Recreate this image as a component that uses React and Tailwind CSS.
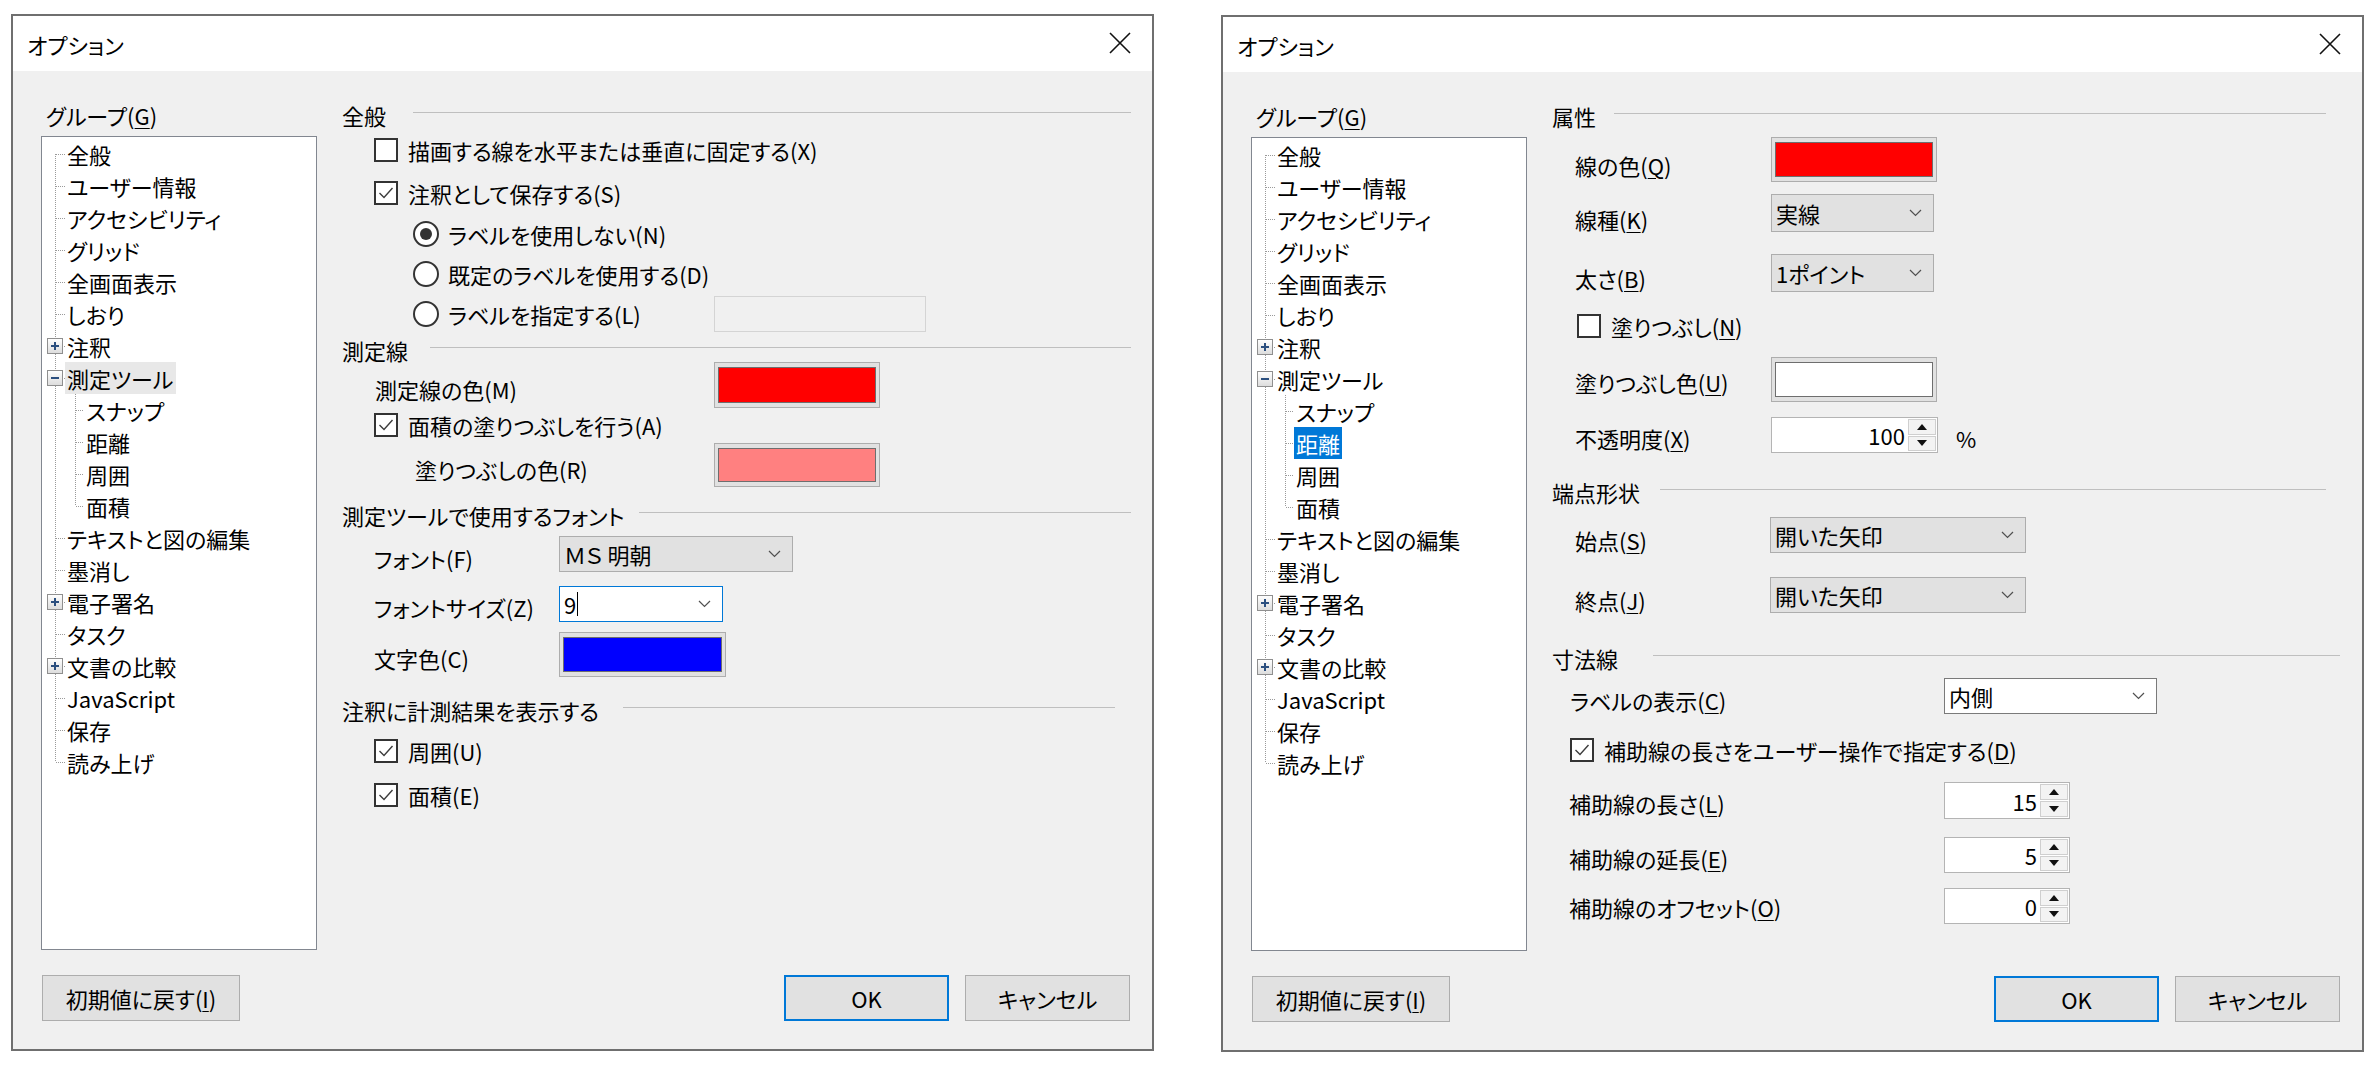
import React from "react";

const FONT = "font-['Noto_Sans_CJK_JP','Noto_Sans_CJK_SC',sans-serif]";

function U({ c }) {
  return <span className="underline underline-offset-[3px] decoration-1">{c}</span>;
}

function Checkbox({ checked }) {
  return (
    <div className="w-[24px] h-[24px] shrink-0 border-2 border-[#333333] bg-white flex items-center justify-center">
      {checked && (
        <svg width="18" height="18" viewBox="0 0 18 18">
          <path d="M2.5 9 L7 13.5 L15.5 4" stroke="#3c3c3c" strokeWidth="1.4" fill="none" />
        </svg>
      )}
    </div>
  );
}

function Radio({ on }) {
  return (
    <div className="w-[26px] h-[26px] shrink-0 rounded-full border-2 border-[#333333] bg-white flex items-center justify-center">
      {on && <div className="w-[12px] h-[12px] rounded-full bg-[#333333]" />}
    </div>
  );
}

function Chevron() {
  return (
    <svg width="13" height="8" viewBox="0 0 13 8" className="shrink-0">
      <path d="M1 1 L6.5 6.5 L12 1" stroke="#505050" strokeWidth="1.2" fill="none" />
    </svg>
  );
}

function SpinArrows() {
  return (
    <div className="w-[30px] shrink-0 flex flex-col p-[1px] gap-[1px]">
      <div className="flex-1 bg-[#f3f3f3] border border-[#cfcfcf] flex items-center justify-center">
        <svg width="10" height="6" viewBox="0 0 10 6"><path d="M0 6 L5 0 L10 6 Z" fill="#111" /></svg>
      </div>
      <div className="flex-1 bg-[#f3f3f3] border border-[#cfcfcf] flex items-center justify-center">
        <svg width="10" height="6" viewBox="0 0 10 6"><path d="M0 0 L10 0 L5 6 Z" fill="#111" /></svg>
      </div>
    </div>
  );
}

function Header({ title, lineStart, mr, h = "h-[32px]", mt = "" }) {
  return (
    <div className={`flex items-center ${h} ${mt} ${mr}`}>
      <span className={`${lineStart} shrink-0 whitespace-nowrap`}>{title}</span>
      <div className="flex-1 h-px bg-[#bfbfbf] mb-[6px]" />
    </div>
  );
}

function PlusBox({ minus }) {
  return (
    <g>
      <defs>
        <linearGradient id="pbg" x1="0" y1="0" x2="0" y2="1">
          <stop offset="0" stopColor="#ffffff" />
          <stop offset="1" stopColor="#dcdcdc" />
        </linearGradient>
      </defs>
      <rect x="5.5" y="8.5" width="15" height="15" fill="url(#pbg)" stroke="#8f8f8f" />
      <line x1="9" y1="16" x2="17" y2="16" stroke="#2b4f7f" strokeWidth="2" />
      {!minus && <line x1="13" y1="12" x2="13" y2="20" stroke="#2b4f7f" strokeWidth="2" />}
    </g>
  );
}

const DOT = { stroke: "#9a9a9a", strokeWidth: 1, strokeDasharray: "1 1" };

const TREE = [
  { t: "全般", first: true },
  { t: "ユーザー情報" },
  { t: "アクセシビリティ" },
  { t: "グリッド" },
  { t: "全画面表示" },
  { t: "しおり" },
  { t: "注釈", box: "+" },
  { t: "測定ツール", box: "-", selL: true },
  { t: "スナップ", child: true },
  { t: "距離", child: true, selR: true },
  { t: "周囲", child: true },
  { t: "面積", child: true, lastChild: true },
  { t: "テキストと図の編集" },
  { t: "墨消し" },
  { t: "電子署名", box: "+" },
  { t: "タスク" },
  { t: "文書の比較", box: "+" },
  { t: "JavaScript" },
  { t: "保存" },
  { t: "読み上げ", last: true },
];

function TreeRow({ item, side }) {
  const sel = side === "left" ? item.selL : item.selR;
  const selCls =
    side === "left" && sel
      ? "bg-[#e8e8e8] text-black"
      : side === "right" && sel
      ? "bg-[#0078d7] text-white"
      : "text-black";
  return (
    <div className="flex h-[32px] items-center">
      {item.child ? (
        <svg width="42" height="32" className="shrink-0">
          <line x1="13.5" y1="0" x2="13.5" y2="32" {...DOT} />
          <line x1="33.5" y1="0" x2="33.5" y2={item.lastChild ? 16 : 32} {...DOT} />
          <line x1="34" y1="16.5" x2="42" y2="16.5" {...DOT} />
        </svg>
      ) : (
        <svg width="23" height="32" className="shrink-0">
          <line x1="13.5" y1={item.first ? 16 : 0} x2="13.5" y2={item.last ? 16 : 32} {...DOT} />
          <line x1="14" y1="16.5" x2="23" y2="16.5" {...DOT} />
          {item.box && <PlusBox minus={item.box === "-"} />}
        </svg>
      )}
      <span className={`px-[2px] h-[32px] leading-[32px] whitespace-nowrap ${selCls}`}>{item.t}</span>
    </div>
  );
}

function Swatch({ w, color }) {
  return (
    <div className={`${w} h-full shrink-0 border border-[#adadad] bg-[#e1e1e1] px-[3px] py-[4px]`}>
      <div className={`w-full h-full border border-[#6e6e6e] ${color}`} />
    </div>
  );
}

function Combo({ w, text, variant = "gray", caret = false }) {
  const cls =
    variant === "gray"
      ? "bg-[#e1e1e1] border-[#adadad]"
      : variant === "focus"
      ? "bg-white border-[#0078d7]"
      : "bg-white border-[#7a7a7a]";
  return (
    <div className={`${w} h-full shrink-0 border ${cls} flex items-center pl-[4px] pr-[11px]`}>
      <span className="whitespace-nowrap">{text}</span>
      {caret && <span className="w-px h-[24px] bg-black ml-[1px]" />}
      <span className="flex-1" />
      <Chevron />
    </div>
  );
}

function Spin({ w, value }) {
  return (
    <div className={`${w} h-full shrink-0 border border-[#b4b4b4] bg-white flex`}>
      <div className="flex-1 flex items-center justify-end pr-[2px]">{value}</div>
      <SpinArrows />
    </div>
  );
}

function LeftSettings() {
  return (
    <div className="flex flex-col w-[789px] pt-[28px]">
      <Header title="全般" lineStart="w-[71px]" mr="" />
      <div className="mt-[3px] h-[32px] flex items-center pl-[32px] gap-[10px]">
        <Checkbox />
        <span>描画する線を水平または垂直に固定する(X)</span>
      </div>
      <div className="mt-[11px] h-[32px] flex items-center pl-[32px] gap-[10px]">
        <Checkbox checked />
        <span>注釈として保存する(S)</span>
      </div>
      <div className="mt-[9px] h-[32px] flex items-center pl-[71px] gap-[9px]">
        <Radio on />
        <span>ラベルを使用しない(N)</span>
      </div>
      <div className="mt-[8px] h-[32px] flex items-center pl-[71px] gap-[9px]">
        <Radio />
        <span>既定のラベルを使用する(D)</span>
      </div>
      <div className="mt-[6px] h-[36px] flex items-center">
        <div className="w-[372px] shrink-0 flex items-center pl-[71px] gap-[9px]">
          <Radio />
          <span>ラベルを指定する(L)</span>
        </div>
        <div className="w-[212px] h-full border border-[#d4d4d4] bg-[#f0f0f0]" />
      </div>
      <Header title="測定線" lineStart="w-[88px]" mr="" h="h-[24px]" mt="mt-[6px]" />
      <div className="h-[46px] flex items-center">
        <div className="w-[372px] shrink-0 pl-[33px] mt-[8px]">測定線の色(M)</div>
        <Swatch w="w-[166px]" color="bg-[#ff0000]" />
      </div>
      <div className="mt-[1px] h-[32px] flex items-center pl-[32px] gap-[10px]">
        <Checkbox checked />
        <span>面積の塗りつぶしを行う(A)</span>
      </div>
      <div className="mt-[2px] h-[44px] flex items-center">
        <div className="w-[372px] shrink-0 pl-[73px] mt-[8px]">塗りつぶしの色(R)</div>
        <Swatch w="w-[166px]" color="bg-[#ff8080]" />
      </div>
      <Header title="測定ツールで使用するフォント" lineStart="w-[297px]" mr="" mt="mt-[12px]" />
      <div className="mt-[5px] h-[36px] flex items-center">
        <div className="w-[217px] shrink-0 pl-[32px] mt-[8px]">フォント(F)</div>
        <Combo w="w-[234px]" text="ＭＳ 明朝" />
      </div>
      <div className="mt-[14px] h-[36px] flex items-center">
        <div className="w-[217px] shrink-0 pl-[32px] mt-[6px]">フォントサイズ(Z)</div>
        <Combo w="w-[164px]" text="9" variant="focus" caret />
      </div>
      <div className="mt-[10px] h-[45px] flex items-center">
        <div className="w-[217px] shrink-0 pl-[32px] mt-[7px]">文字色(C)</div>
        <Swatch w="w-[167px]" color="bg-[#0000ff]" />
      </div>
      <Header title="注釈に計測結果を表示する" lineStart="w-[281px]" mr="mr-[16px]" mt="mt-[17px]" />
      <div className="mt-[9px] h-[32px] flex items-center pl-[32px] gap-[10px]">
        <Checkbox checked />
        <span>周囲(U)</span>
      </div>
      <div className="mt-[12px] h-[32px] flex items-center pl-[32px] gap-[10px]">
        <Checkbox checked />
        <span>面積(E)</span>
      </div>
    </div>
  );
}

function RightSettings() {
  return (
    <div className="flex flex-col w-[789px] pt-[28px]">
      <Header title="属性" lineStart="w-[62px]" mr="mr-[15px]" />
      <div className="mt-[5px] h-[45px] flex items-center">
        <div className="w-[219px] shrink-0 pl-[23px] mt-[10px]">線の色(<U c="Q" />)</div>
        <Swatch w="w-[166px]" color="bg-[#ff0000]" />
      </div>
      <div className="mt-[12px] h-[38px] flex items-center">
        <div className="w-[219px] shrink-0 pl-[23px] mt-[12px]">線種(<U c="K" />)</div>
        <Combo w="w-[163px]" text="実線" />
      </div>
      <div className="mt-[22px] h-[38px] flex items-center">
        <div className="w-[219px] shrink-0 pl-[23px] mt-[10px]">太さ(<U c="B" />)</div>
        <Combo w="w-[163px]" text="1ポイント" />
      </div>
      <div className="mt-[18px] h-[32px] flex items-center pl-[25px] gap-[10px]">
        <Checkbox />
        <span>塗りつぶし(<U c="N" />)</span>
      </div>
      <div className="mt-[15px] h-[45px] flex items-center">
        <div className="w-[219px] shrink-0 pl-[23px] mt-[4px]">塗りつぶし色(<U c="U" />)</div>
        <Swatch w="w-[166px]" color="bg-white" />
      </div>
      <div className="mt-[15px] h-[36px] flex items-center">
        <div className="w-[219px] shrink-0 pl-[23px] mt-[6px]">不透明度(<U c="X" />)</div>
        <Spin w="w-[167px]" value="100" />
        <span className="ml-[18px] mt-[6px]">%</span>
      </div>
      <Header title="端点形状" lineStart="w-[108px]" mr="mr-[15px]" mt="mt-[23px]" />
      <div className="mt-[9px] h-[36px] flex items-center">
        <div className="w-[218px] shrink-0 pl-[23px] mt-[10px]">始点(<U c="S" />)</div>
        <Combo w="w-[256px]" text="開いた矢印" />
      </div>
      <div className="mt-[24px] h-[36px] flex items-center">
        <div className="w-[218px] shrink-0 pl-[23px] mt-[10px]">終点(<U c="J" />)</div>
        <Combo w="w-[256px]" text="開いた矢印" />
      </div>
      <Header title="寸法線" lineStart="w-[101px]" mr="mr-[1px]" mt="mt-[29px]" />
      <div className="mt-[4px] h-[36px] flex items-center">
        <div className="w-[392px] shrink-0 pl-[18px] mt-[8px]">ラベルの表示(<U c="C" />)</div>
        <Combo w="w-[213px]" text="内側" variant="white" />
      </div>
      <div className="mt-[20px] h-[32px] flex items-center pl-[18px] gap-[10px]">
        <Checkbox checked />
        <span>補助線の長さをユーザー操作で指定する(<U c="D" />)</span>
      </div>
      <div className="mt-[16px] h-[37px] flex items-center">
        <div className="w-[392px] shrink-0 pl-[17px] mt-[4px]">補助線の長さ(<U c="L" />)</div>
        <Spin w="w-[126px]" value="15" />
      </div>
      <div className="mt-[18px] h-[36px] flex items-center">
        <div className="w-[392px] shrink-0 pl-[17px] mt-[6px]">補助線の延長(<U c="E" />)</div>
        <Spin w="w-[126px]" value="5" />
      </div>
      <div className="mt-[15px] h-[36px] flex items-center">
        <div className="w-[392px] shrink-0 pl-[17px] mt-[2px]">補助線のオフセット(<U c="O" />)</div>
        <Spin w="w-[126px]" value="0" />
      </div>
    </div>
  );
}

function Dialog({ side }) {
  return (
    <div
      className={`w-[1143px] h-[1037px] shrink-0 border-2 border-[#6f6f6f] flex flex-col bg-[#f0f0f0] ${
        side === "right" ? "mt-[1px]" : ""
      }`}
    >
      <div className="h-[55px] shrink-0 bg-white flex items-center pl-[14px]">
        <span>オプション</span>
        <span className="flex-1" />
        <svg width="22" height="22" viewBox="0 0 22 22" className="mr-[21px] mb-[2px]">
          <path d="M1 1 L21 21 M21 1 L1 21" stroke="#111" strokeWidth="1.6" />
        </svg>
      </div>
      <div className="flex-1 flex flex-col">
        <div className="h-[879px] shrink-0 flex">
          <div className="ml-[28px] w-[276px] shrink-0 flex flex-col pt-[28px]">
            <div className="h-[32px] leading-[32px] pl-[5px]">
              グループ(<U c="G" />)
            </div>
            <div className="mt-[5px] h-[814px] border border-[#828790] bg-white pt-[1px]">
              {TREE.map((it) => (
                <TreeRow key={it.t} item={it} side={side} />
              ))}
            </div>
          </div>
          <div className="ml-[25px]">{side === "left" ? <LeftSettings /> : <RightSettings />}</div>
        </div>
        <div className="mt-[25px] h-[46px] flex">
          <div className="ml-[29px] w-[198px] h-full border border-[#adadad] bg-[#e1e1e1] flex items-center justify-center">
            初期値に戻す(<U c="I" />)
          </div>
          <span className="flex-1" />
          <div className="w-[165px] h-full border-2 border-[#0078d7] bg-[#e1e1e1] flex items-center justify-center">
            OK
          </div>
          <div className="ml-[16px] mr-[22px] w-[165px] h-full border border-[#adadad] bg-[#e1e1e1] flex items-center justify-center">
            キャンセル
          </div>
        </div>
      </div>
    </div>
  );
}

export default function App() {
  return (
    <div
      className={`w-[2373px] h-[1067px] bg-white flex items-start pl-[11px] pt-[14px] gap-[67px] text-[22px] leading-[32px] text-black [font-feature-settings:'palt'] ${FONT}`}
    >
      <Dialog side="left" />
      <Dialog side="right" />
    </div>
  );
}
